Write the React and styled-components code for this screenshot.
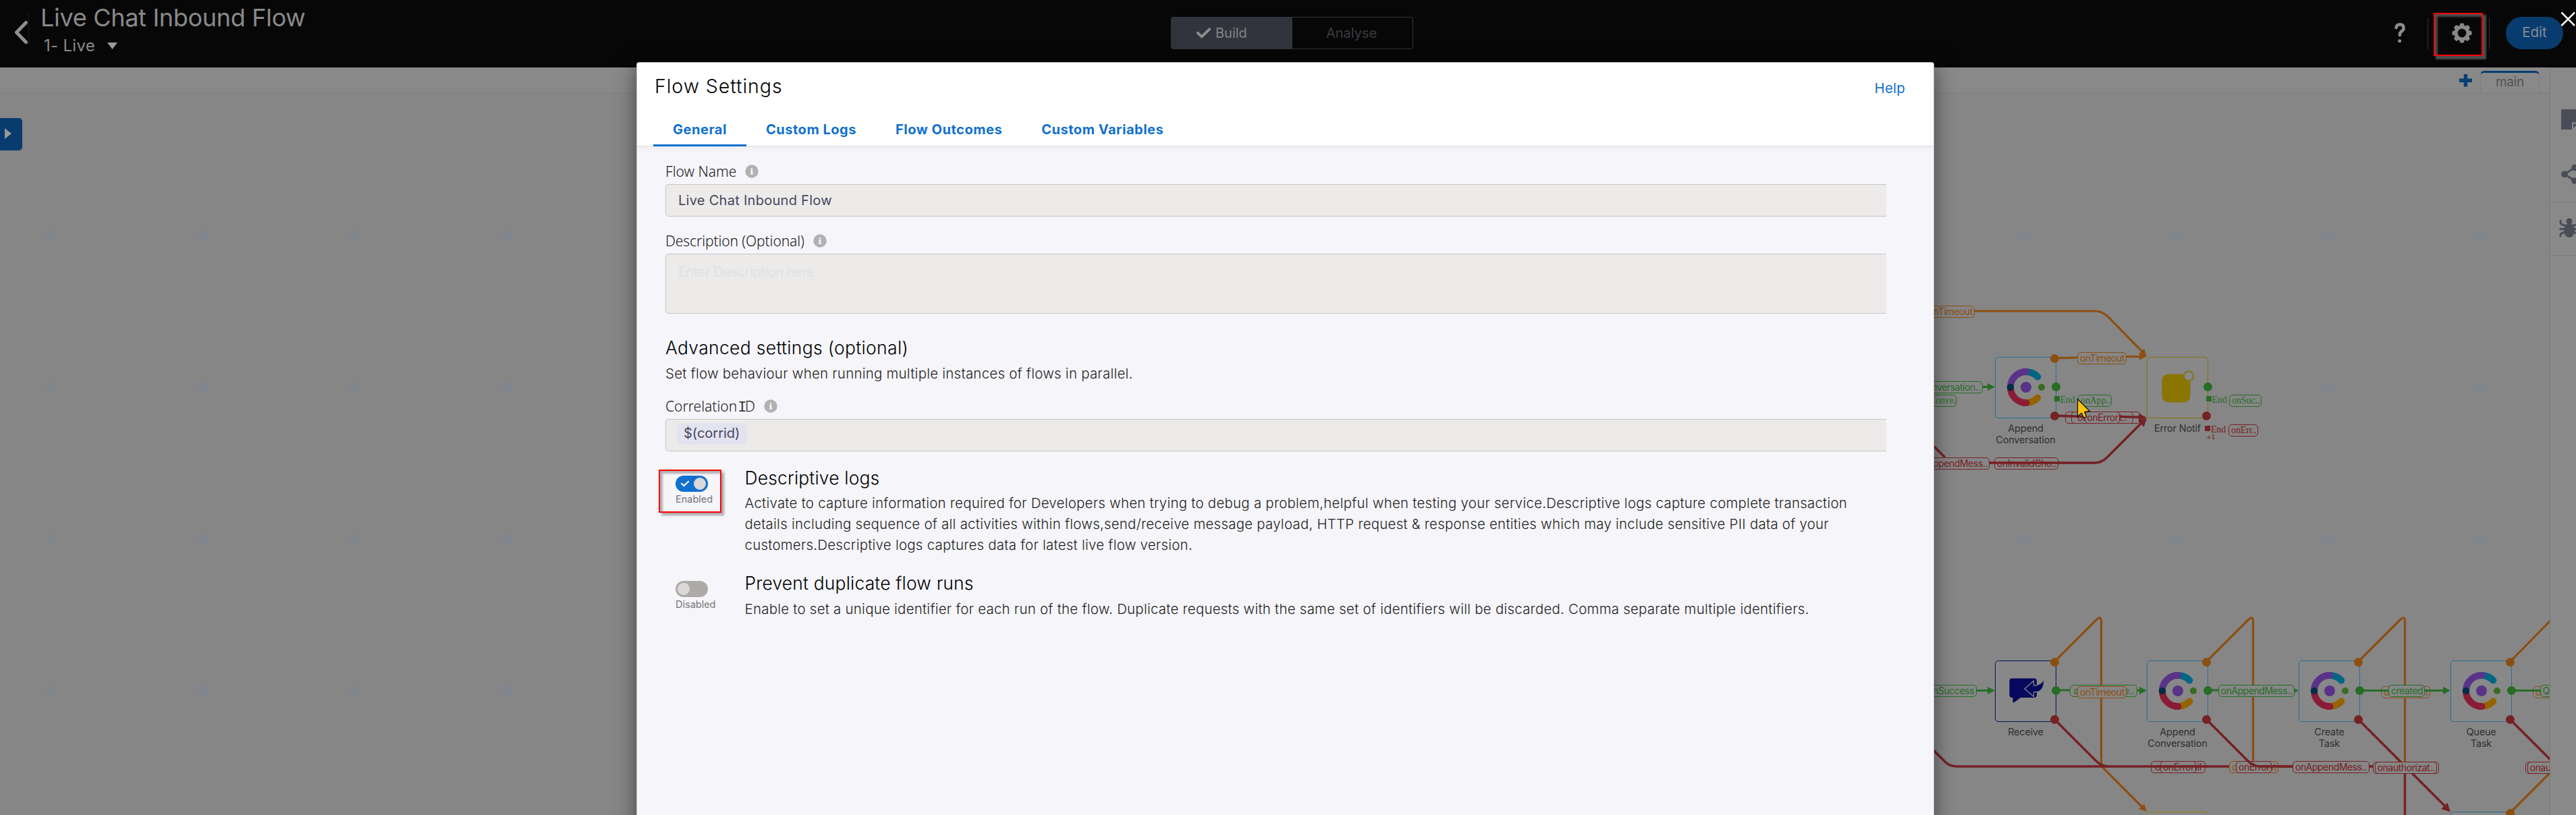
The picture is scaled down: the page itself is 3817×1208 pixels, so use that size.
import React from 'react';
import styled, { createGlobalStyle, css } from 'styled-components';

const STAGE_TOP = 138;
const ORANGE = '#8c4f12';
const GREEN = '#266d26';
const RED = '#762124';
const SKY = '#2f6c93';
const NAVY = '#05164f';
const OLIVE = '#81740f';

const Global = createGlobalStyle`
  *, *::before, *::after { box-sizing: border-box; }
  body { margin: 0; background: #868686; font-family: Inter, "Liberation Sans", sans-serif; }
`;

const Page = styled.div`
  position: relative;
  height: 1208px;
  overflow: hidden;
  display: flex;
  flex-direction: column;
`;

/* ---------- header ---------- */

const Header = styled.header`
  height: 100px;
  flex: none;
  display: flex;
  align-items: flex-start;
  background: #070707;
  color: #8a8a8a;
`;

const FlowIdentity = styled.div`
  width: 1735px;
  display: flex;
`;

const BackButton = styled.div`
  width: 43px;
  height: 48px;
  margin-top: 18px;
  border-right: 1px solid #1c1c1c;
  border-top-right-radius: 5px;
  svg { display: block; margin: 10px 0 0 20px; }
`;

const FlowTitle = styled.div`
  margin: 4px 0 0 17px;
  font-size: 36px;
  font-weight: 400;
  line-height: 45px;
  letter-spacing: -0.3px;
  white-space: nowrap;
`;

const VersionPicker = styled.div`
  display: flex;
  align-items: center;
  gap: 18px;
  margin: 4px 0 0 22px;
  font-size: 24px;
  line-height: 30px;
  letter-spacing: 0.3px;
`;

const Segmented = styled.div`
  margin-top: 25px;
  width: 359px;
  height: 48px;
  display: flex;
  border: 1px solid #31343d;
  border-radius: 3px;
  overflow: hidden;
`;

const Segment = styled.div`
  flex: 0 0 ${(p) => (p.$on ? '179px' : '178px')};
  display: flex;
  align-items: center;
  gap: 7px;
  padding-left: ${(p) => (p.$on ? '37px' : '50px')};
  font-size: 20px;
  background: ${(p) => (p.$on ? '#31343d' : 'transparent')};
  color: ${(p) => (p.$on ? '#848484' : '#3b3b41')};
`;

const HeaderTools = styled.div`
  margin: 25px 19px 0 auto;
  height: 48px;
  display: flex;
  align-items: center;
  svg { display: block; }
`;

const Divider = styled.i`
  width: 1px;
  height: 47px;
  background: #2e2e2e;
  margin: 0 ${(p) => p.$after}px 0 ${(p) => p.$before}px;
`;

const GearSlot = styled.div`
  position: relative;
`;

const highlight = css`
  position: absolute;
  border: 2px solid #ff0000;
`;

const GearHighlight = styled.div`
  ${highlight}
  left: -27px;
  top: -15px;
  width: 73px;
  height: 64px;
  box-shadow: 4px 4px 2px 1px #4c4c4c, inset 4px 4px 3px #4c4c4c;
`;

const EditButton = styled.div`
  width: 85px;
  height: 48px;
  border-radius: 24px;
  background: #083c6f;
  color: #838c96;
  font-size: 20.5px;
  line-height: 46px;
  text-align: center;
`;

const CloseIcon = styled.svg`
  position: absolute;
  left: 3794px;
  top: 17px;
`;

/* ---------- workspace ---------- */

const Workspace = styled.main`
  flex: 1;
  display: flex;
  min-height: 0;
`;

const Editor = styled.section`
  flex: 1;
  display: flex;
  flex-direction: column;
  min-width: 0;
`;

const TabStrip = styled.div`
  height: 38px;
  flex: none;
  display: flex;
  justify-content: flex-end;
  align-items: flex-start;
  padding-right: 15px;
  background: #898989;
  border-bottom: 1px solid #7d7d7d;
`;

const AddTab = styled.svg`
  margin: 10px 12px 0 0;
`;

const CanvasTab = styled.div`
  width: 88px;
  height: 32px;
  margin-top: 5px;
  border: 1px solid #7c7c7c;
  border-top: 3px solid #083d72;
  border-bottom: 0;
  border-radius: 6px 6px 0 0;
  font-size: 19px;
  line-height: 27px;
  letter-spacing: -0.3px;
  text-align: center;
  color: #515151;
`;

const Rail = styled.aside`
  width: 39px;
  overflow: hidden;
  background: #898989;
  border-left: 1px solid #7b7b7b;
  border-top: 1px solid #7f7f7f;
  svg { display: block; }
`;

const RailItem = styled.div`
  height: ${(p) => p.$h}px;
  padding: ${(p) => p.$top}px 0 0 ${(p) => p.$left}px;
  border-bottom: ${(p) => (p.$line ? '1px solid #7b7b7b' : '0')};
`;

const Stage = styled.div`
  position: relative;
  flex: 1;
  overflow: hidden;
  background-color: #868686;
  background-image: radial-gradient(circle at center, #80868c 9px, transparent 10px);
  background-size: 225px 225px;
  background-position: -36.5px 98.5px;
`;

const PaletteHandle = styled.div`
  width: 33px;
  height: 48px;
  margin-top: 37px;
  padding: 15px 0 0 7px;
  border-radius: 0 5px 5px 0;
  background: #083c6f;
  svg { display: block; }
`;

const EdgeLayer = styled.svg`
  position: absolute;
  inset: 0;
`;

const NodeCard = styled.div`
  position: absolute;
  left: ${(p) => p.$x}px;
  top: ${(p) => p.$y - STAGE_TOP}px;
  width: 91px;
  height: 91px;
  border: 1.5px solid ${(p) => p.$c};
  border-radius: 5px;
  background: #888888;
`;

const NodeArt = styled.svg`
  position: absolute;
  left: 14.5px;
  top: 14px;
`;

const Port = styled.i`
  position: absolute;
  left: ${(p) => p.$x}px;
  top: ${(p) => p.$y}px;
  width: 13.4px;
  height: 13.4px;
  border-radius: 50%;
  background: ${(p) => p.$c};
`;

const NodeName = styled.div`
  position: absolute;
  top: 96px;
  left: -20px;
  right: -20px;
  text-align: center;
  font-size: 14.5px;
  line-height: 17px;
  letter-spacing: -0.2px;
  white-space: pre-line;
  color: #303030;
`;

const EdgeLabel = styled.div`
  position: absolute;
  left: ${(p) => p.$x}px;
  top: ${(p) => p.$y - STAGE_TOP}px;
  width: ${(p) => p.$w}px;
  height: 18px;
  border: 1px solid ${(p) => p.$c};
  border-radius: 5px;
  background: #868686;
  color: ${(p) => p.$c};
  font-family: ${(p) => (p.$serif ? '"Liberation Serif", serif' : 'inherit')};
  font-size: 14px;
  line-height: 15px;
  letter-spacing: ${(p) => (p.$serif ? -0.1 : -0.45)}px;
  text-align: ${(p) => p.$align || 'center'};
  padding: 0 3px;
  white-space: nowrap;
  overflow: hidden;
`;

const EndMark = styled.div`
  position: absolute;
  left: ${(p) => p.$x}px;
  top: ${(p) => p.$y - STAGE_TOP}px;
  display: flex;
  color: ${(p) => p.$c};
  font: 14px/18px "Liberation Serif", serif;
  letter-spacing: -0.2px;
  &::before {
    content: '';
    width: 8px;
    height: 8px;
    margin: 3px 1px 0 0;
    background: ${(p) => p.$c};
  }
`;

const MoreCount = styled.div`
  position: absolute;
  left: 3269px;
  top: ${642 - STAGE_TOP}px;
  font: 9.5px/12px "DejaVu Sans", sans-serif;
  letter-spacing: -0.5px;
  white-space: nowrap;
  color: ${RED};
`;

const Cursor = styled.svg`
  position: absolute;
  left: 3076px;
  top: ${589 - STAGE_TOP}px;
`;

/* ---------- modal ---------- */

const Modal = styled.div`
  position: absolute;
  left: 943px;
  top: 92px;
  width: 1923px;
  height: 1140px;
  border: 1px solid #b9b9b9;
  border-radius: 4px 4px 0 0;
  background: #fff;
  box-shadow: 0 4px 30px rgba(0, 0, 0, 0.5);
`;

const ModalHead = styled.div`
  height: 75px;
  display: flex;
  justify-content: space-between;
  padding: 17px 42px 0 26px;
  background: linear-gradient(#fff 95%, #fcfcfc);
`;

const ModalTitle = styled.h1`
  margin: 0;
  font-size: 28.5px;
  font-weight: 300;
  line-height: 36px;
  letter-spacing: 0.95px;
  color: #000;
`;

const HelpLink = styled.a`
  margin-top: 5px;
  font-size: 20.5px;
  line-height: 31px;
  letter-spacing: 0.2px;
  color: #1170cf;
`;

const Tabs = styled.nav`
  height: 49px;
  display: flex;
  padding-left: 24px;
  border-bottom: 1px solid #dedede;
`;

const Tab = styled.div`
  height: 49px;
  padding: 0 29px;
  font-size: 20px;
  font-weight: 700;
  line-height: 48px;
  letter-spacing: 0.53px;
  color: #1170cf;
  border-bottom: ${(p) => (p.$active ? '3px solid #1170cf' : '0')};
`;

const ModalBody = styled.div`
  height: 1000px;
  margin-right: 1px;
  padding: 22px 69px 0 42px;
  background: linear-gradient(#efeff4, #f5f5fa 10px);
`;

const FieldLabel = styled.label`
  display: flex;
  align-items: center;
  height: 30px;
  margin: ${(p) => p.$gap || 0}px 0 4px;
  font-family: "Noto Sans", sans-serif;
  font-size: 21px;
  font-weight: 300;
  line-height: 30px;
  letter-spacing: ${(p) => p.$ls || 0}px;
  color: #161616;
  svg { margin: -1px 0 0 13px; }
`;

const SlabLetter = styled.span`
  font-family: "Liberation Mono", monospace;
  font-size: 22px;
  line-height: 20px;
  margin: 0 -2.5px 0 -4.5px;
  color: #3a3a3a;
`;

const FieldBox = styled.div`
  height: ${(p) => p.$h || 48}px;
  padding: ${(p) => p.$pad || '0 18px'};
  border: 1px solid #c6c6c6;
  border-right: 0;
  border-radius: 5px 0 0 5px;
  background: #ecebe9;
  font-size: 20px;
  line-height: ${(p) => p.$lh || 46}px;
  letter-spacing: ${(p) => p.$ls || 0.28}px;
  color: ${(p) => p.$c || '#46465f'};
`;

const Chip = styled.span`
  display: block;
  width: 104px;
  height: 32px;
  padding-left: 10px;
  border-radius: 8px;
  background: #e3e3f0;
  line-height: 31px;
  letter-spacing: 0;
`;

const SectionTitle = styled.h2`
  margin: ${(p) => p.$gap || 0}px 0 0;
  font-size: 26.4px;
  font-weight: 300;
  line-height: 33px;
  letter-spacing: ${(p) => p.$ls}px;
  color: #000;
`;

const Copy = styled.p`
  margin: ${(p) => p.$gap}px 20px 0 0;
  font-size: 20.4px;
  font-weight: 300;
  line-height: 31px;
  letter-spacing: 0.27px;
  color: #1e1e20;
`;

const Option = styled.div`
  position: relative;
  display: flex;
  margin-top: ${(p) => p.$gap}px;
`;

const OptionSwitch = styled.div`
  width: 117.5px;
  flex: none;
  padding: 13px 0 0 15px;
  font-size: 14.5px;
  line-height: 22px;
  color: #767676;
`;

const Track = styled.div`
  width: 48px;
  height: 24px;
  display: flex;
  align-items: center;
  justify-content: ${(p) => (p.$on ? 'space-between' : 'flex-start')};
  padding: 0 3px 0 ${(p) => (p.$on ? 8 : 3)}px;
  border-radius: 12px;
  background: ${(p) => (p.$on ? '#1170cf' : '#aeaaa7')};
`;

const Knob = styled.i`
  width: 18px;
  height: 18px;
  border-radius: 50%;
  background: #dad9d8;
`;

const OptionText = styled.div`
  flex: 1;
`;

const OptionHighlight = styled.div`
  ${highlight}
  left: -10px;
  top: 4px;
  width: 93px;
  height: 64px;
  box-shadow: 4px 4px 3px rgba(0, 0, 0, 0.3), inset 4px 4px 3px rgba(0, 0, 0, 0.28);
`;

/* ---------- icons ---------- */

const InfoIcon = () => (
  <svg width="20" height="20" viewBox="0 0 20 20">
    <circle cx="10" cy="10" r="9.7" fill="#b1b1b1" />
    <path d="M8.8 5.2h2.4v2.2H8.8zM8 8.6h3.2v4.6h1v1.4H7.9v-1.4h1V10H8z" fill="#fff" />
  </svg>
);

const Check = ({ w, h, sw, c }) => (
  <svg width={w} height={h} viewBox="0 0 20 15" fill="none" stroke={c} strokeWidth={sw}>
    <path d="M1.5 7.2L7.3 12.6L18.4 2" strokeLinecap="round" />
  </svg>
);

const Gear = () => (
  <svg width="30" height="30" viewBox="-15 -15 30 30">
    <circle r="8.9" fill="none" stroke="#888" strokeWidth="5" />
    {[0, 45, 90, 135, 180, 225, 270, 315].map((a) => (
      <path key={a} transform={`rotate(${a})`} d="M-4 -10L-2.4 -14.5H2.4L4 -10Z" fill="#888" />
    ))}
  </svg>
);

const ContactRing = () => (
  <NodeArt width="60" height="60" viewBox="-30 -30 60 60" fill="none" strokeWidth="10" strokeLinecap="round">
    <path d="M3 -22.8A23 23 0 0 1 17.3 -15.5" stroke="#006684" />
    <path d="M-23 0A23 23 0 0 1 0 -23" stroke="#5a3388" strokeLinecap="butt" />
    <path d="M-3 -22.8L0.5 -23" stroke="#5a3388" />
    <path d="M3 22.8A23 23 0 0 0 17.3 15.5" stroke="#946400" />
    <path d="M-23 0A23 23 0 0 0 0 23" stroke="#8b1c37" strokeLinecap="butt" />
    <path d="M-3 22.8L0.5 23" stroke="#8b1c37" />
    <circle cx="-23" cy="0" r="5.2" fill="#002d45" />
    <circle cx="23" cy="0" r="5.1" fill="#3a6c22" />
    <circle r="8" fill="#5a3388" />
  </NodeArt>
);

const ReplyBubble = () => (
  <NodeArt width="60" height="60" viewBox="0 0 60 60">
    <path d="M9.500 11.500H42a4 4 0 0 1 4 4V36a4 4 0 0 1 -4 4H22L12.500 47Q10.500 48.500 10.500 46V40H9.500a4 4 0 0 1 -4 -4V15.500a4 4 0 0 1 4 -4Z" fill="#05085c" />
    <path d="M28 27L41.500 15V22Q53 23 56 14.500Q57 31.500 41.500 32V38.500Z" fill="#05085c" stroke="#888" strokeWidth="1.300" strokeLinejoin="round" />
    <path d="M46.700 21.800Q53.500 20.500 56 14.500Q56.500 28 46.700 31Z" fill="#05085c" />
  </NodeArt>
);

const Notification = () => (
  <NodeArt width="60" height="60" viewBox="0 0 60 60">
    <rect x="6.500" y="10.500" width="42" height="42" rx="9" fill="#8a7500" />
    <circle cx="46" cy="13.500" r="7.200" fill="#888" stroke="#81740f" strokeWidth="2" />
  </NodeArt>
);

/* ---------- diagram data ---------- */

const NODES = [
  { x: 2956, y: 528.5, c: SKY, art: <ContactRing />, name: 'Append\nConversation', ports: 'ogr' },
  { x: 3181, y: 528.5, c: OLIVE, art: <Notification />, name: 'Error Notif', ports: 'gr' },
  { x: 2956, y: 978.5, c: NAVY, art: <ReplyBubble />, name: 'Receive', ports: 'ogr' },
  { x: 3181, y: 978.5, c: SKY, art: <ContactRing />, name: 'Append\nConversation', ports: 'ogr' },
  { x: 3406, y: 978.5, c: SKY, art: <ContactRing />, name: 'Create\nTask', ports: 'ogr' },
  { x: 3631, y: 978.5, c: SKY, art: <ContactRing />, name: 'Queue\nTask', ports: 'ogr' },
  { x: 3181, y: 1203, c: '#8f8310', ports: '' },
  { x: 3631, y: 1203, c: SKY, ports: 'o' },
];

const LABELS = [
  { x: 2853, y: 452.5, w: 73, c: ORANGE, t: 'onTimeout' },
  { x: 3078, y: 521.5, w: 73, c: ORANGE, t: 'onTimeout' },
  { x: 2823, y: 564.5, w: 115, c: GREEN, t: 'onConversation..', a: 'right' },
  { x: 2841, y: 584.5, w: 58, c: GREEN, t: 'onConve..', a: 'right', serif: true },
  { x: 3079, y: 584.5, w: 50, c: GREEN, t: 'onApp..', serif: true },
  { x: 3303, y: 584.5, w: 48, c: GREEN, t: 'onSuc..', serif: true },
  { x: 3302, y: 628.5, w: 44, c: RED, t: 'onErr..', serif: true },
  { x: 3060, y: 610, w: 112, c: RED, t: 'onConversat..' },
  { x: 3069, y: 610, w: 91.5, c: RED, t: 'onTimeout..' },
  { x: 3088.5, y: 610, w: 52.5, c: RED, t: 'onError' },
  { x: 2835, y: 677.5, w: 113, c: RED, t: 'onAppendMess..' },
  { x: 2955, y: 677.5, w: 95, c: RED, t: 'onInvalidCho..' },
  { x: 2848, y: 1015, w: 81, c: GREEN, t: 'onSuccess', a: 'right' },
  { x: 3067, y: 1015, w: 100, c: GREEN, t: 'appendMe..e..' },
  { x: 3078, y: 1016.5, w: 73, c: ORANGE, t: 'onTimeout' },
  { x: 3286.5, y: 1015, w: 113, c: GREEN, t: 'onAppendMess..' },
  { x: 3528, y: 1016.5, w: 73, c: ORANGE, t: 'onTimeout' },
  { x: 3753, y: 1016.5, w: 73, c: ORANGE, t: 'onTimeout' },
  { x: 3187, y: 1127.5, w: 81, c: RED, t: 'onSendFail' },
  { x: 3201, y: 1127.5, w: 52.5, c: RED, t: 'onError' },
  { x: 3303, y: 1127.5, w: 73, c: ORANGE, t: 'onTimeout' },
  { x: 3313, y: 1127.5, w: 52.5, c: RED, t: 'onError' },
  { x: 3397, y: 1127.5, w: 113.5, c: RED, t: 'onAppendMess..' },
  { x: 3516, y: 1129, w: 98, c: RED, t: '' },
  { x: 3518.5, y: 1129, w: 92, c: RED, t: 'onauthorizat..' },
  { x: 3742, y: 1129, w: 98, c: RED, t: '' },
  { x: 3744.5, y: 1129, w: 92, c: RED, t: 'onauthorizat..' },
];

const TOP_LABELS = [
  { x: 3539, y: 1015, w: 54, c: GREEN, t: 'created' },
  { x: 3763.5, y: 1015, w: 56, c: GREEN, t: 'Queued' },
];

const PORTS = {
  o: { x: 80, y: -5, c: ORANGE },
  g: { x: 82, y: 37.5, c: GREEN },
  r: { x: 80, y: 80.5, c: RED },
};

const Arrow = ({ x, y, a = 0, c, s = 11 }) => (
  <path d={`M0 0L${-s} ${-s / 2}V${s / 2}Z`} transform={`translate(${x} ${y}) rotate(${a})`} fill={c} stroke="none" />
);

const edgeBox = { width: 3778, height: 1070, viewBox: `0 ${STAGE_TOP} 3778 1070`, fill: 'none' };

const Edges = () => (
  <EdgeLayer {...edgeBox}>
    <g stroke={ORANGE} strokeWidth="3.2">
      <path d="M2926 461H3104Q3114 461 3122 468L3174 521" />
      <path d="M3044 531L3080 530M3150 528.500H3172" />
      {[0, 225, 450].map((d) => (
        <path key={d} transform={`translate(${d} 0)`} d="M3044 981L3106.500 918.500Q3113.500 911.500 3113.500 921.500V1129" />
      ))}
      <path d="M3113.500 1129Q3113.500 1135 3119 1141L3175 1197" />
      <path d="M3719 981L3780 919M3719 1205L3780 1144" />
    </g>
    <g stroke={GREEN} strokeWidth="3.2">
      <path d="M2937 573.500H2947M2928 1023.500H2947M3046 1023H3068M3166 1023.500H3172M3271 1023H3287" />
    </g>
    <g stroke={RED} strokeWidth="3.5">
      <path d="M2860 656L2882 678" />
      <path d="M2948 686H3104Q3114 686 3122 678L3176 624" />
      <path d="M2860 1107L2882 1129Q2889 1136 2900 1136H3397" />
      <path d="M3044 1066L3106 1128Q3114 1136 3124 1136" />
      <path d="M3510 1136H3517M3494 1066L3624 1196M3563.500 1147V1210" />
      <path d="M3719 1066L3784 1131" />
    </g>
    <Arrow x={3181} y={528.5} a={45} c={ORANGE} />
    <Arrow x={3181} y={528} c={ORANGE} />
    <Arrow x={3181} y={1203} a={45} c={ORANGE} />
    <Arrow x={2956} y={573.5} c={GREEN} />
    <Arrow x={2956} y={1023.5} c={GREEN} />
    <Arrow x={3181} y={1023.5} c={GREEN} />
    <Arrow x={3406} y={1023.5} c={GREEN} />
    <Arrow x={3631} y={1203.5} a={45} c={RED} s={13} />
  </EdgeLayer>
);

const OverEdges = () => (
  <EdgeLayer {...edgeBox}>
    <g stroke={RED} strokeWidth="3.5">
      <path d="M3044 616L3088 617.500M3141 617.500L3172 618.500" />
      <path d="M2954 686H3051" />
      <path d="M3187 1136H3270" />
      <path d="M3269 1066L3331 1128Q3339 1136 3349 1136H3397" />
    </g>
    <g stroke={GREEN} strokeWidth="3.2">
      <path d="M3496 1023.500H3622M3721 1023.500H3765" />
    </g>
    <Arrow x={3181} y={619} c={RED} s={12} />
    <Arrow x={3181} y={620} a={-45} c={RED} s={12} />
    <Arrow x={3631} y={1023.5} c={GREEN} />
  </EdgeLayer>
);

const renderLabel = (l, i) => (
  <EdgeLabel key={i} $x={l.x} $y={l.y} $w={l.w} $c={l.c} $align={l.a} $serif={l.serif}>{l.t}</EdgeLabel>
);

const Diagram = () => (
  <>
    <Edges />
    {NODES.map((n, i) => (
      <NodeCard key={i} $x={n.x} $y={n.y} $c={n.c}>
        {n.art}
        <NodeName>{n.name}</NodeName>
      </NodeCard>
    ))}
    {LABELS.map(renderLabel)}
    <OverEdges />
    {TOP_LABELS.map(renderLabel)}
    {NODES.map((n, i) =>
      [...n.ports].map((k) => (
        <Port key={i + k} $x={n.x + PORTS[k].x + 1.5} $y={n.y + PORTS[k].y + 1 - STAGE_TOP} $c={PORTS[k].c} />
      ))
    )}
    <EndMark $x={3043.5} $y={584} $c={GREEN}>End</EndMark>
    <EndMark $x={3268.5} $y={584} $c={GREEN}>End</EndMark>
    <EndMark $x={3267} $y={628} $c={RED}>End</EndMark>
    <MoreCount>+1</MoreCount>
    <Cursor width="24" height="32" viewBox="0 0 24 32">
      <path d="M2.500 2.500V28.500L8.300 23.200L12 30.500L15.800 28.700L12.800 21.500L20.500 20.500Z" fill="#ffc20e" stroke="#111" strokeWidth="1.300" />
    </Cursor>
  </>
);

const SettingsModal = () => (
  <Modal>
    <ModalHead>
      <ModalTitle>Flow Settings</ModalTitle>
      <HelpLink>Help</HelpLink>
    </ModalHead>
    <Tabs>
      <Tab $active>General</Tab>
      <Tab>Custom Logs</Tab>
      <Tab>Flow Outcomes</Tab>
      <Tab>Custom Variables</Tab>
    </Tabs>
    <ModalBody>
      <FieldLabel>Flow Name<InfoIcon /></FieldLabel>
      <FieldBox>Live Chat Inbound Flow</FieldBox>
      <FieldLabel $gap={21} $ls={-0.1}>Description (Optional)<InfoIcon /></FieldLabel>
      <FieldBox $h={89} $pad="10px 18px" $lh={32} $ls={-0.45} $c="#e0e0e6">Enter Description here</FieldBox>
      <SectionTitle $gap={34} $ls={0.37}>Advanced settings (optional)</SectionTitle>
      <Copy $gap={5.5}>Set flow behaviour when running multiple instances of flows in parallel.</Copy>
      <FieldLabel $gap={18.5}><span>Correlation <SlabLetter>I</SlabLetter>D</span><InfoIcon /></FieldLabel>
      <FieldBox $pad="5px 16px"><Chip>$(corrid)</Chip></FieldBox>
      <Option $gap={23}>
        <OptionSwitch>
          <Track $on><Check w={12} h={10} sw={3.6} c="#fff" /><Knob /></Track>
          Enabled
        </OptionSwitch>
        <OptionHighlight />
        <OptionText>
          <SectionTitle $ls={0.2}>Descriptive logs</SectionTitle>
          <Copy $gap={4.5}>
            Activate to capture information required for Developers when trying to debug a problem,helpful when testing your service.Descriptive logs capture complete transaction details including sequence of all activities within flows,send/receive message payload, HTTP request &amp; response entities which may include sensitive PII data of your customers.Descriptive logs captures data for latest live flow version.
          </Copy>
        </OptionText>
      </Option>
      <Option $gap={25.5}>
        <OptionSwitch>
          <Track><Knob /></Track>
          Disabled
        </OptionSwitch>
        <OptionText>
          <SectionTitle $ls={0.2}>Prevent duplicate flow runs</SectionTitle>
          <Copy $gap={5.5}>
            Enable to set a unique identifier for each run of the flow. Duplicate requests with the same set of identifiers will be discarded. Comma separate multiple identifiers.
          </Copy>
        </OptionText>
      </Option>
    </ModalBody>
  </Modal>
);

export default function App() {
  return (
    <Page>
      <Global />
      <Header>
        <FlowIdentity>
          <BackButton>
            <svg width="22" height="40" viewBox="0 0 22 40" fill="none" stroke="#8f8f8f" strokeWidth="5" strokeLinecap="round" strokeLinejoin="round">
              <path d="M18.500 5.500L4.500 20L18.500 34.500" />
            </svg>
          </BackButton>
          <div>
            <FlowTitle>Live Chat Inbound Flow</FlowTitle>
            <VersionPicker>
              1- Live
              <svg width="15" height="10" viewBox="0 0 15 10"><path d="M0 0H15L7.500 10Z" fill="#999" /></svg>
            </VersionPicker>
          </div>
        </FlowIdentity>
        <Segmented>
          <Segment $on><Check w={21} h={16} sw={3.6} c="#8f8f8f" />Build</Segment>
          <Segment>Analyse</Segment>
        </Segmented>
        <HeaderTools>
          <svg width="16" height="30" viewBox="0 0 16 30" fill="none" stroke="#8c8c8c" strokeWidth="4.5" strokeLinecap="round">
            <path d="M2.500 7Q3.500 2.300 8 2.300Q13.600 2.300 13.600 7.500Q13.600 10.500 10.500 12.500Q7.800 14.300 7.800 18" />
            <circle cx="7.7" cy="26.7" r="2.5" fill="#8c8c8c" stroke="none" />
          </svg>
          <Divider $before={33} $after={35} />
          <GearSlot><GearHighlight /><Gear /></GearSlot>
          <Divider $before={25} $after={24} />
          <EditButton>Edit</EditButton>
        </HeaderTools>
      </Header>
      <Workspace>
        <Editor>
          <TabStrip>
            <AddTab width="19" height="19" viewBox="0 0 19 19"><path d="M9.500 0V18.500M0 9.200H19" stroke="#083d72" strokeWidth="5.5" /></AddTab>
            <CanvasTab>main</CanvasTab>
          </TabStrip>
          <Stage>
            <PaletteHandle>
              <svg width="10" height="16" viewBox="0 0 10 16"><path d="M0 0L10 8L0 16Z" fill="#999" /></svg>
            </PaletteHandle>
            <Diagram />
          </Stage>
        </Editor>
        <Rail>
          <RailItem $h={143} $top={61} $left={16}>
            <svg width="30" height="30" viewBox="0 0 30 30">
              <path d="M1.500 0H30V19.300H16V30H0V1.500Q0 0 1.500 0Z" fill="#4a4d58" />
              <path d="M18 21.500H24L18 28Z" fill="#4a4d58" />
            </svg>
          </RailItem>
          <RailItem $h={56} $top={0} $left={16} $line>
            <svg width="30" height="30" viewBox="0 0 30 30">
              <path d="M20 4.500L5 14.300L20 24" stroke="#4a4d58" strokeWidth="3" fill="none" />
              <circle cx="5" cy="14.3" r="5" fill="#4a4d58" /><circle cx="20" cy="4.5" r="4.8" fill="#4a4d58" /><circle cx="20" cy="24" r="4.8" fill="#4a4d58" />
            </svg>
          </RailItem>
          <RailItem $h={79} $top={23} $left={13} $line>
            <svg width="32" height="32" viewBox="0 0 32 32" fill="none" stroke="#4a4d58" strokeWidth="2.8" strokeLinecap="round">
              <ellipse cx="15" cy="18.5" rx="8" ry="10.5" fill="#4a4d58" stroke="none" />
              <circle cx="15" cy="5" r="4.5" fill="#4a4d58" stroke="none" />
              <path d="M2 4V7Q2.500 10.500 9 11M21 11Q27.500 10.500 28 7V4M1.500 16.500H8M22 16.500H29M2 27V25Q2.500 22 8 21.500M22 21.500Q27.500 22 28 25V27" />
            </svg>
          </RailItem>
        </Rail>
      </Workspace>
      <SettingsModal />
      <CloseIcon width="23" height="23" viewBox="0 0 23 23"><path d="M1.500 1.500L21 21M21 1.500L1.500 21" stroke="#fff" strokeWidth="2.6" /></CloseIcon>
    </Page>
  );
}
